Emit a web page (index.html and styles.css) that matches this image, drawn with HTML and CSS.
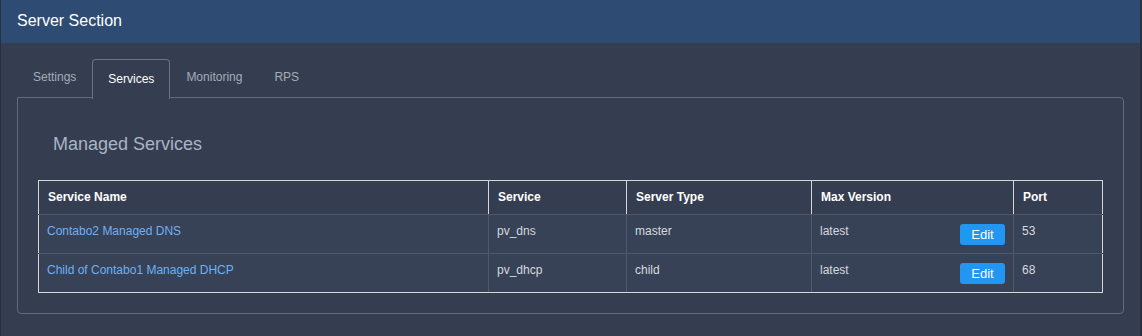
FILE: index.html
```html
<!DOCTYPE html>
<html lang="en">
  <head>
    <meta charset="utf-8" />
    <title>Server Section</title>
    <link rel="stylesheet" href="styles.css">
  </head>
  <body>
    <div id="page">
      <div id="header">Server Section</div>
      <div id="content">
        <ul class="tabs">
          <li><a href="#">Settings</a></li>
          <li class="active"><a href="#">Services</a></li>
          <li><a href="#">Monitoring</a></li>
          <li><a href="#">RPS</a></li>
        </ul>
        <div class="panel">
          <h2>Managed Services</h2>
          <table class="services">
            <colgroup>
              <col class="c-name">
              <col class="c-service">
              <col class="c-type">
              <col class="c-version">
              <col class="c-port">
            </colgroup>
            <thead>
              <tr>
                <th>Service Name</th>
                <th>Service</th>
                <th>Server Type</th>
                <th>Max Version</th>
                <th>Port</th>
              </tr>
            </thead>
            <tbody>
              <tr>
                <td><a href="#">Contabo2 Managed DNS</a></td>
                <td>pv_dns</td>
                <td>master</td>
                <td>latest <button class="edit">Edit</button></td>
                <td>53</td>
              </tr>
              <tr>
                <td><a href="#">Child of Contabo1 Managed DHCP</a></td>
                <td>pv_dhcp</td>
                <td>child</td>
                <td>latest <button class="edit">Edit</button></td>
                <td>68</td>
              </tr>
            </tbody>
          </table>
        </div>
      </div>
    </div>
  </body>
</html>
```

FILE: styles.css
```css
html, body {
    margin: 0;
    padding: 0;
    background-color: #353e51;
}

body {
    font-family: "Liberation Sans", Arial, Helvetica, sans-serif;
    font-size: 12px;
    color: #d5d9df;
}

#page {
    height: 336px;
    border-left: 1px solid #283040;
    border-right: 2px solid #283040;
    box-sizing: border-box;
}

#header {
    height: 43px;
    line-height: 41px;
    padding: 0 16px;
    background-color: #2e4c73;
    color: #fff;
    font-size: 16px;
}

#content {
    padding: 16px 16px 0 16px;
}

ul.tabs {
    display: flex;
    margin: 0;
    padding: 0;
    list-style: none;
    height: 38px;
}

  ul.tabs li {
      border: 1px solid transparent;
      border-bottom: 0;
      border-radius: 4px 4px 0 0;
  }

  ul.tabs li a {
      display: block;
      padding: 0 15px;
      line-height: 35px;
      color: #a4acb8;
      text-decoration: none;
  }

  ul.tabs li.active {
      border-color: #66738a;
      background-color: #353e51;
      position: relative;
      z-index: 1;
      height: 39px;
  }

  ul.tabs li.active a { color: #fff; padding-top: 2px; }

.panel {
    border: 1px solid #5f6b81;
    border-radius: 0 4px 4px 4px;
    padding: 20px 20px 20px 20px;
}

.panel h2 {
    margin: 15px 0 25px 15px;
    font-size: 18px;
    font-weight: normal;
    color: #aab4c3;
    line-height: 22px;
}

table.services {
    width: 100%;
    border-collapse: collapse;
    table-layout: fixed;
    border: 1px solid #d6d6d6;
}

  col.c-name { width: 450px; }
  col.c-service { width: 138px; }
  col.c-type { width: 185px; }
  col.c-version { width: 202px; }
  col.c-port { width: auto; }

  table.services th {
      text-align: left;
      color: #fff;
      font-weight: bold;
      padding: 10px 9px;
      line-height: 13px;
      border-left: 1px solid #d6d6d6;
      border-bottom: 1px solid #4d586b;
  }

  table.services td {
      vertical-align: top;
      padding: 9px 8px 8px 8px;
      line-height: 14px;
      height: 21px;
      border-left: 1px solid #4f5a6d;
      border-bottom: 1px solid #4d586b;
      background-color: #384257;
  }

  table.services tbody tr:last-child td { border-bottom: 1px solid #d6d6d6; }
  table.services td:first-child, table.services th:first-child { border-left: 1px solid #d6d6d6; }
  table.services td:last-child { border-left-color: #4f5a6d; }

  table.services td a {
      color: #6cb1f3;
      text-decoration: none;
  }

button.edit {
    float: right;
    width: 45px;
    height: 21px;
    padding: 0;
    border: 0;
    border-radius: 3px;
    background-color: #2196f3;
    color: #fff;
    font-family: "Liberation Sans", Arial, sans-serif;
    font-size: 13px;
    line-height: 21px;
}
```
